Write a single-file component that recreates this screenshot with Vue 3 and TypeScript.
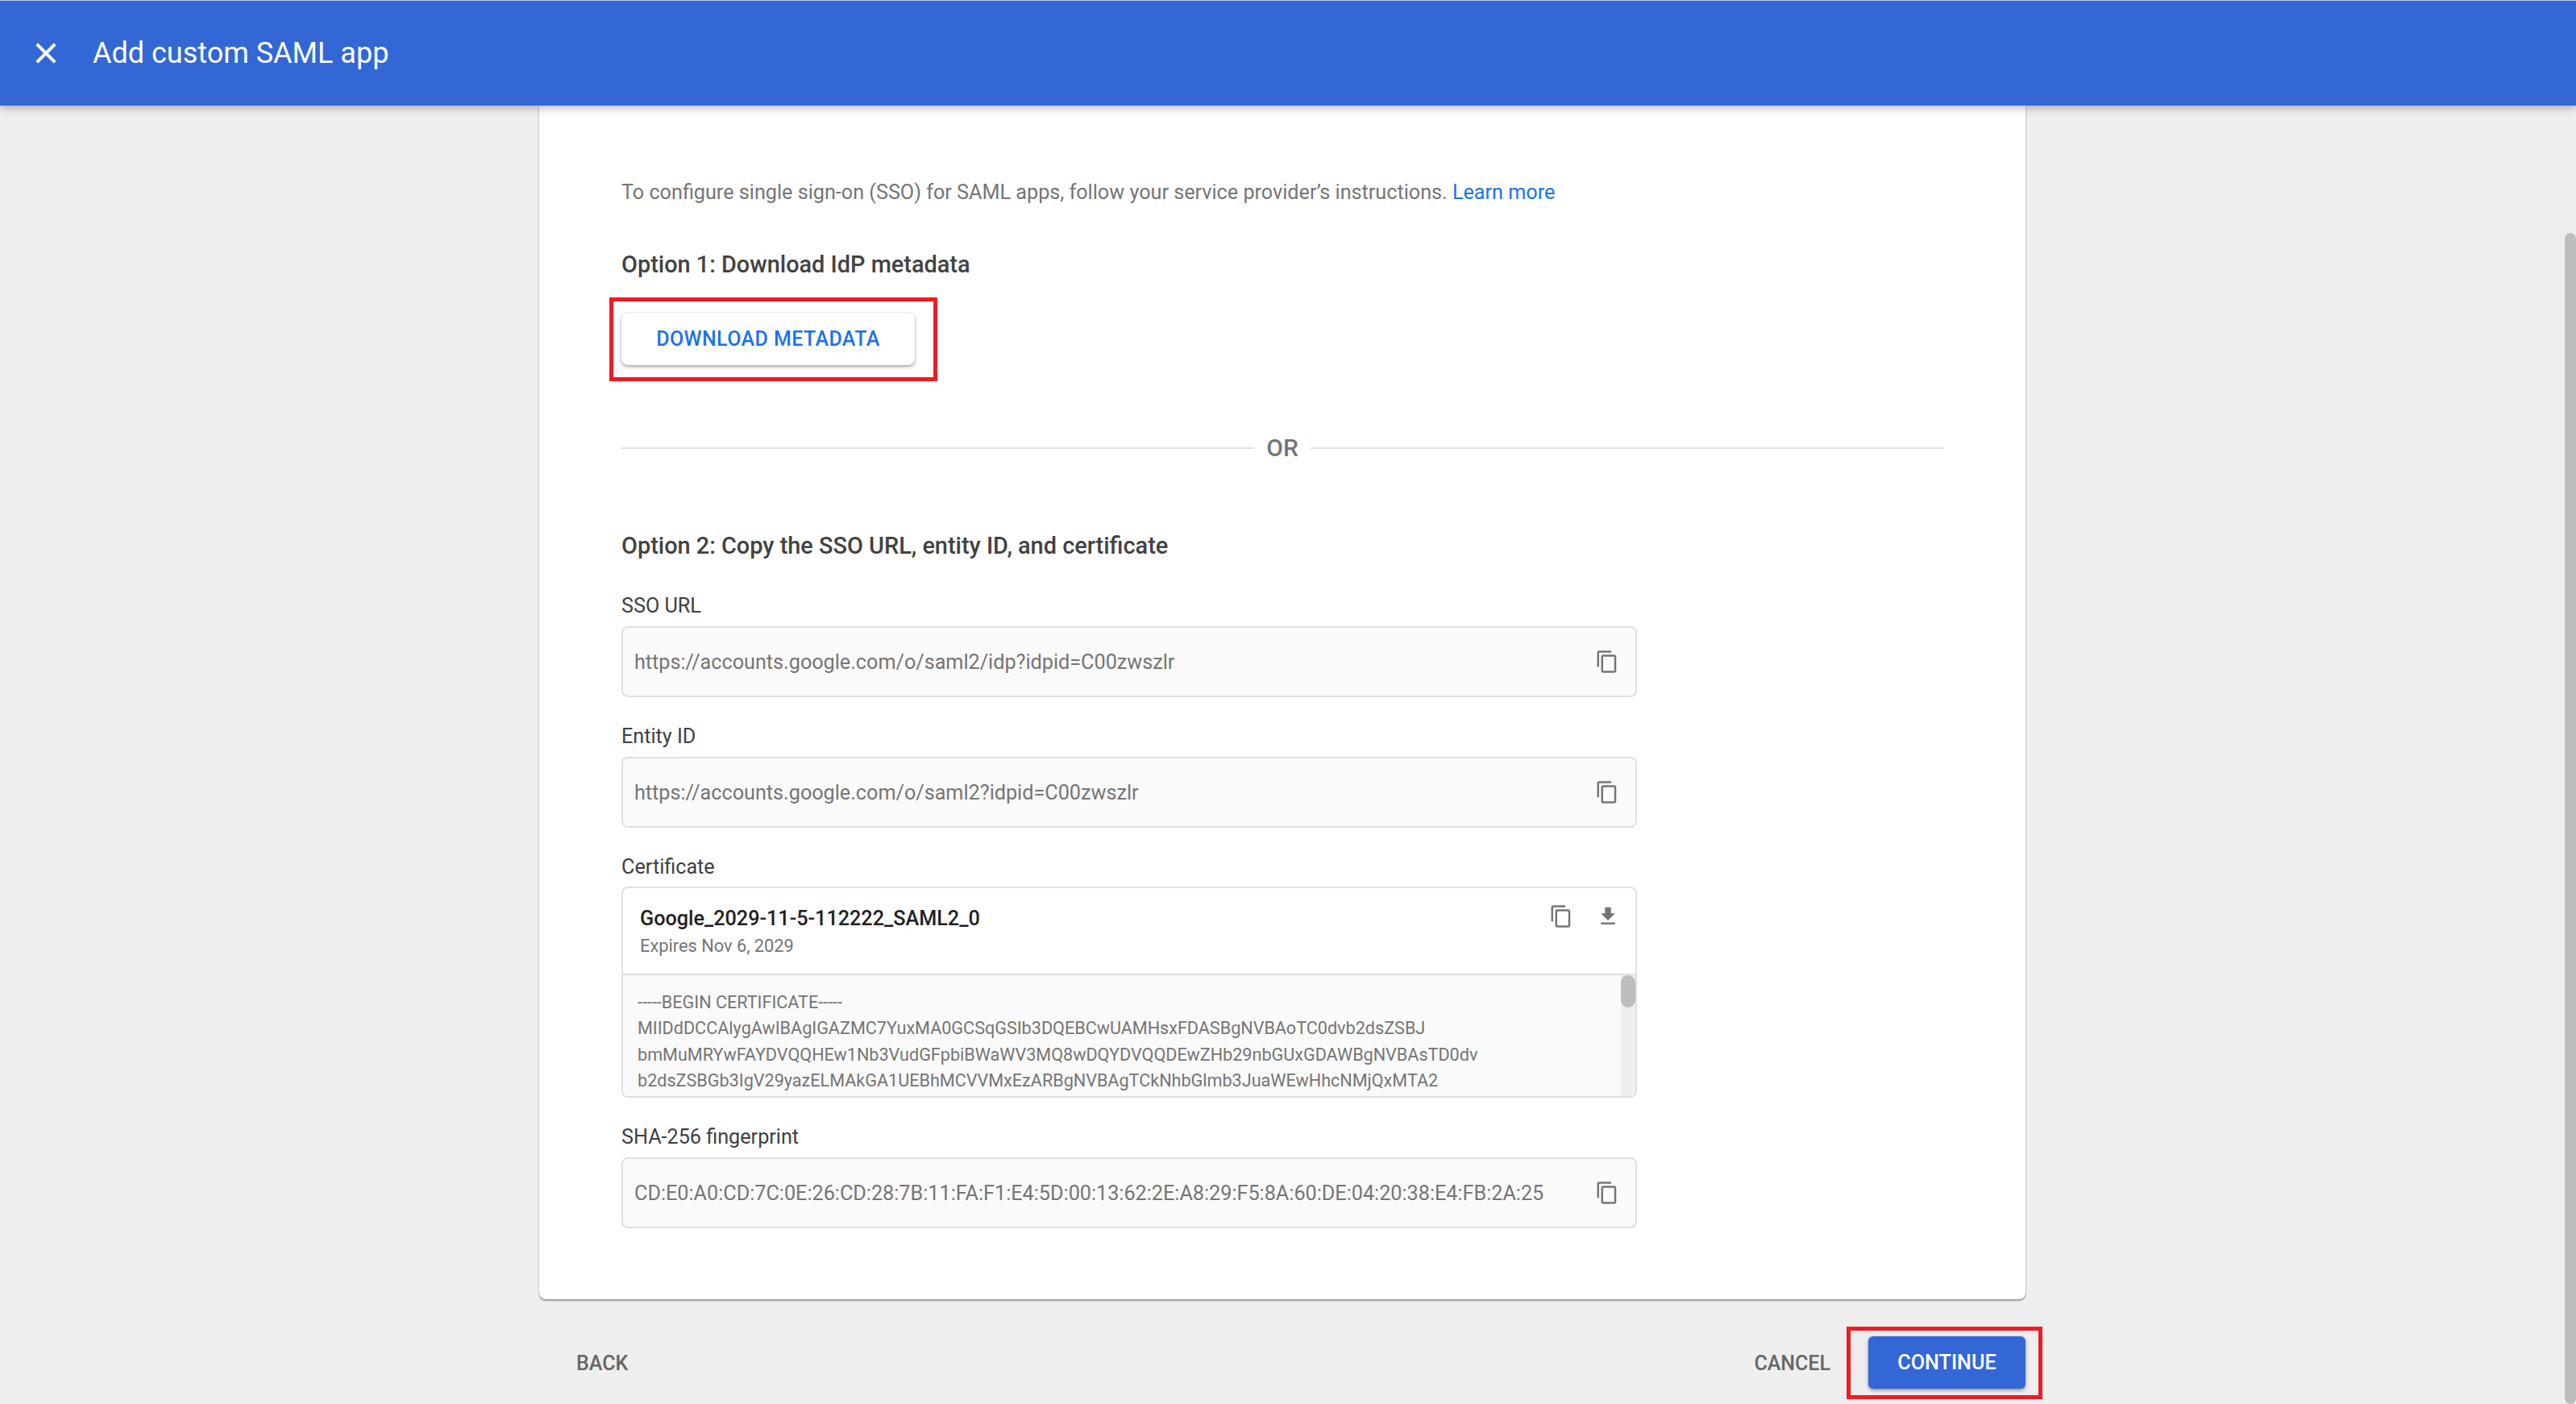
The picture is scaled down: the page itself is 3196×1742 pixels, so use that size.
<script setup lang="ts">
interface CopyField {
  label: string
  value: string
}

const copyPath =
  'M16 1H4c-1.1 0-2 .9-2 2v14h2V3h12V1zm3 4H8c-1.1 0-2 .9-2 2v14c0 1.1.9 2 2 2h11c1.1 0 2-.9 2-2V7c0-1.1-.9-2-2-2zm0 16H8V7h11v14z'

const urlFields: CopyField[] = [
  { label: 'SSO URL', value: 'https://accounts.google.com/o/saml2/idp?idpid=C00zwszlr' },
  { label: 'Entity ID', value: 'https://accounts.google.com/o/saml2?idpid=C00zwszlr' },
]

const fingerprint: CopyField = {
  label: 'SHA-256 fingerprint',
  value: 'CD:E0:A0:CD:7C:0E:26:CD:28:7B:11:FA:F1:E4:5D:00:13:62:2E:A8:29:F5:8A:60:DE:04:20:38:E4:FB:2A:25',
}

const certLines = [
  '-----BEGIN CERTIFICATE-----',
  'MIIDdDCCAlygAwIBAgIGAZMC7YuxMA0GCSqGSIb3DQEBCwUAMHsxFDASBgNVBAoTC0dvb2dsZSBJ',
  'bmMuMRYwFAYDVQQHEw1Nb3VudGFpbiBWaWV3MQ8wDQYDVQQDEwZHb29nbGUxGDAWBgNVBAsTD0dv',
  'b2dsZSBGb3IgV29yazELMAkGA1UEBhMCVVMxEzARBgNVBAgTCkNhbGlmb3JuaWEwHhcNMjQxMTA2',
]
</script>

<template>
  <div class="page">
    <header class="appbar">
      <svg class="appbar__close" viewBox="0 0 24 24" aria-hidden="true">
        <path d="M19 6.41L17.59 5 12 10.59 6.41 5 5 6.41 10.59 12 5 17.59 6.41 19 12 13.41 17.59 19 19 17.59 13.41 12z" />
      </svg>
      <h1 class="appbar__title">Add custom SAML app</h1>
    </header>

    <main class="content">
      <section class="card">
        <p class="intro">
          To configure single sign-on (SSO) for SAML apps, follow your service provider’s instructions.
          <a class="intro__link">Learn more</a>
        </p>

        <h2 class="option option--first">Option 1: Download IdP metadata</h2>
        <div class="download">
          <button class="download__btn" type="button">DOWNLOAD METADATA</button>
          <span class="marker marker--download"></span>
        </div>

        <div class="divider"><span>OR</span></div>

        <h2 class="option option--second">Option 2: Copy the SSO URL, entity ID, and certificate</h2>

        <div v-for="field in urlFields" :key="field.label" class="group">
          <label class="group__label">{{ field.label }}</label>
          <div class="field">
            <span class="field__value">{{ field.value }}</span>
            <svg class="icon" viewBox="0 0 24 24" aria-hidden="true"><path :d="copyPath" /></svg>
          </div>
        </div>

        <div class="group">
          <label class="group__label group__label--cert">Certificate</label>
          <div class="cert">
            <div class="cert__head">
              <div>
                <div class="cert__name">Google_2029-11-5-112222_SAML2_0</div>
                <div class="cert__expiry">Expires Nov 6, 2029</div>
              </div>
              <div class="cert__actions">
                <svg class="icon" viewBox="0 0 24 24" aria-hidden="true"><path :d="copyPath" /></svg>
                <svg class="icon" viewBox="0 0 24 24" aria-hidden="true"><path d="M19 9h-4V3H9v6H5l7 7 7-7zM5 18v2h14v-2H5z" /></svg>
              </div>
            </div>
            <div class="cert__body">
              <div class="cert__text">
                <div v-for="line in certLines" :key="line">{{ line }}</div>
              </div>
              <div class="cert__track"><div class="cert__thumb"></div></div>
            </div>
          </div>
        </div>

        <div class="group">
          <label class="group__label">{{ fingerprint.label }}</label>
          <div class="field">
            <span class="field__value">{{ fingerprint.value }}</span>
            <svg class="icon" viewBox="0 0 24 24" aria-hidden="true"><path :d="copyPath" /></svg>
          </div>
        </div>
      </section>

      <footer class="actions">
        <button class="actions__text actions__text--back" type="button">BACK</button>
        <div class="actions__right">
          <button class="actions__text" type="button">CANCEL</button>
          <div class="continue">
            <button class="continue__btn" type="button">CONTINUE</button>
            <span class="marker marker--continue"></span>
          </div>
        </div>
      </footer>
    </main>

    <div class="page-scroll"></div>
  </div>
</template>

<style>
html,
body {
  margin: 0;
  background: #eeeeee;
}
</style>

<style scoped>
* {
  box-sizing: border-box;
}

.page {
  position: relative;
  height: 1742px;
  overflow: hidden;
  background: #eeeeee;
  font-family: Roboto, "Liberation Sans", sans-serif;
}

.appbar {
  position: relative;
  z-index: 2;
  display: flex;
  align-items: center;
  height: 131px;
  padding-left: 36px;
  background: #3367d6;
  border-top: 1px solid #b9c6e6;
  box-shadow: 0 3px 10px rgba(0, 0, 0, 0.28);
}

.appbar__close {
  width: 42px;
  height: 42px;
  fill: #ffffff;
  stroke: #ffffff;
  stroke-width: 0.4;
}

.appbar__title {
  margin: 0 0 0 37px;
  font-size: 36px;
  font-weight: 400;
  color: #ffffff;
}

.content {
  width: 1844px;
  margin-left: 669px;
}

.card {
  padding: 88px 102px 88px;
  background: #ffffff;
  border-radius: 0 0 8px 8px;
  box-shadow: 0 2px 2px rgba(0, 0, 0, 0.35), 0 0 2px rgba(0, 0, 0, 0.18);
}

.intro {
  margin: 0;
  font-size: 25.2px;
  line-height: 40px;
  color: #757575;
}

.intro__link {
  color: #1a73e8;
}

.option {
  margin: 0;
  font-size: 28.9px;
  line-height: 40px;
  font-weight: 500;
  color: #424242;
}

.option--first {
  margin-top: 49px;
}

.option--second {
  margin-top: 81px;
}

.download {
  position: relative;
  width: 364px;
  margin-top: 40px;
}

.download__btn {
  display: block;
  width: 100%;
  height: 65px;
  border: none;
  border-radius: 8px;
  background: #ffffff;
  box-shadow: 0 2px 4px rgba(0, 0, 0, 0.35), 0 0 2px rgba(0, 0, 0, 0.12);
  font: 500 25px Roboto, sans-serif;
  letter-spacing: 0.4px;
  color: #1a73e8;
}

.marker {
  position: absolute;
  border: 5px solid #ed1c24;
  pointer-events: none;
}

.marker--download {
  top: -19px;
  right: -28px;
  bottom: -20px;
  left: -15px;
}

.divider {
  display: flex;
  align-items: center;
  gap: 15px;
  margin-top: 83px;
  font-size: 30px;
  line-height: 40px;
  font-weight: 500;
  color: #757575;
}

.divider::before,
.divider::after {
  content: '';
  flex: 1;
  height: 2px;
  background: #e0e0e0;
}

.group {
  margin-top: 33px;
}

.option--second + .group {
  margin-top: 39px;
}

.group__label {
  display: block;
  margin-bottom: 9px;
  font-size: 25.2px;
  line-height: 32px;
  color: #3c4043;
}

.group__label--cert {
  margin-bottom: 8px;
}

.field {
  display: flex;
  align-items: center;
  justify-content: space-between;
  width: 1260px;
  height: 88px;
  padding: 0 20px 0 14px;
  background: #fafafa;
  border: 2px solid #e0e0e0;
  border-radius: 8px;
}

.field__value {
  font-size: 25.2px;
  color: #757575;
}

.icon {
  flex: none;
  width: 30px;
  height: 30px;
  fill: #757575;
}

.cert {
  width: 1260px;
  height: 262px;
  border: 2px solid #e0e0e0;
  border-radius: 8px;
  overflow: hidden;
}

.cert__head {
  display: flex;
  justify-content: space-between;
  height: 108px;
  padding: 20px 19px 0 21px;
  border-bottom: 2px solid #e0e0e0;
}

.cert__name {
  font-size: 25.2px;
  line-height: 36px;
  font-weight: 500;
  color: #202124;
}

.cert__expiry {
  margin-top: -2px;
  font-size: 21.8px;
  line-height: 36px;
  color: #757575;
}

.cert__actions {
  display: flex;
  gap: 28px;
}

.cert__body {
  display: flex;
  justify-content: space-between;
  height: 152px;
  background: #fafafa;
}

.cert__text {
  padding: 18px 0 0 18px;
  font-size: 21.6px;
  line-height: 32.3px;
  color: #757575;
  white-space: nowrap;
}

.cert__track {
  width: 18px;
  background: #eeeeee;
}

.cert__thumb {
  height: 40px;
  border-radius: 9px;
  background: #bdbdbd;
}

.actions {
  display: flex;
  align-items: flex-start;
  justify-content: space-between;
  margin-top: 46px;
}

.actions__text {
  height: 66px;
  padding: 0;
  border: none;
  background: none;
  font: 500 25px Roboto, sans-serif;
  color: #666666;
}

.actions__text--back {
  margin-left: 46px;
}

.actions__right {
  display: flex;
  align-items: flex-start;
  gap: 47px;
}

.continue {
  position: relative;
}

.continue__btn {
  display: block;
  width: 195px;
  height: 65px;
  padding-top: 1px;
  border: none;
  border-radius: 6px;
  background: #3367d6;
  box-shadow: 0 2px 4px rgba(0, 0, 0, 0.4);
  font: 500 25.2px Roboto, sans-serif;
  color: #ffffff;
}

.marker--continue {
  top: -12px;
  right: -21px;
  bottom: -13px;
  left: -27px;
}

.page-scroll {
  position: absolute;
  top: 289px;
  right: 0;
  bottom: 0;
  width: 14px;
  border-radius: 8px;
  background: #bdbdbd;
}
</style>
